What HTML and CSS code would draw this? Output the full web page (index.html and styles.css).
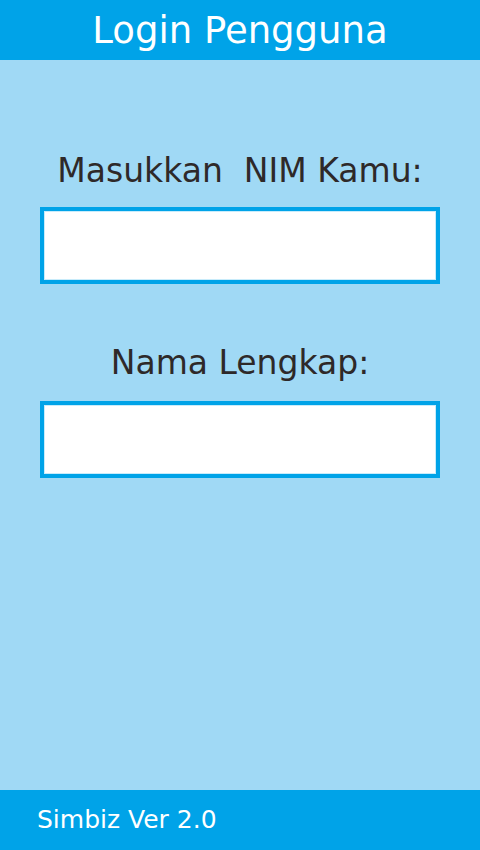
FILE: index.html
```html
<!DOCTYPE html>
<html lang="id">
<head>
<meta charset="utf-8">
<title>Login Pengguna</title>
<link rel="stylesheet" href="styles.css">
</head>
<body>
<div class="app">
  <header class="topbar">
    <h1 class="title">Login Pengguna</h1>
  </header>
  <main class="content">
    <div class="field field-nim">
      <label class="label" for="nim">Masukkan&nbsp; NIM Kamu:</label>
      <input class="input" id="nim" type="text">
    </div>
    <div class="field field-nama">
      <label class="label" for="nama">Nama Lengkap:</label>
      <input class="input" id="nama" type="text">
    </div>
  </main>
  <footer class="bottombar">
    <span class="version">Simbiz Ver 2.0</span>
  </footer>
</div>
</body>
</html>
```

FILE: styles.css
```css
* { box-sizing: border-box; }
html, body { margin: 0; padding: 0; }
body {
  font-family: "DejaVu Sans", sans-serif;
  background: #a0d9f5;
}
.app {
  display: flex;
  flex-direction: column;
  width: 480px;
  height: 850px;
}
.topbar {
  height: 60px;
  background: #00a3e8;
  display: flex;
  align-items: center;
  justify-content: center;
}
.title {
  margin: 0;
  color: #ffffff;
  font-weight: normal;
  font-size: 37px;
  line-height: 1;
}
.content {
  flex: 1;
  display: flex;
  flex-direction: column;
  padding: 0 40px;
}
.field {
  display: flex;
  flex-direction: column;
  align-items: center;
}
.field-nim { margin-top: 91px; }
.field-nama { margin-top: 59px; }
.label {
  color: #2e2929;
  font-size: 33px;
  line-height: 40px;
}
.input {
  margin-top: 16px;
  width: 400px;
  height: 77px;
  border: 4px solid #00a3e8;
  background: #ffffff;
  box-shadow: inset 0 0 0 1px #c8ecfb;
  outline: none;
  padding: 0 10px;
  font-size: 24px;
}
.field-nama .input { margin-top: 18px; }
.bottombar {
  height: 60px;
  background: #00a3e8;
  display: flex;
  align-items: center;
  padding-left: 37px;
  padding-bottom: 2px;
}
.version {
  color: #ffffff;
  font-size: 25px;
  line-height: 1;
}
```
